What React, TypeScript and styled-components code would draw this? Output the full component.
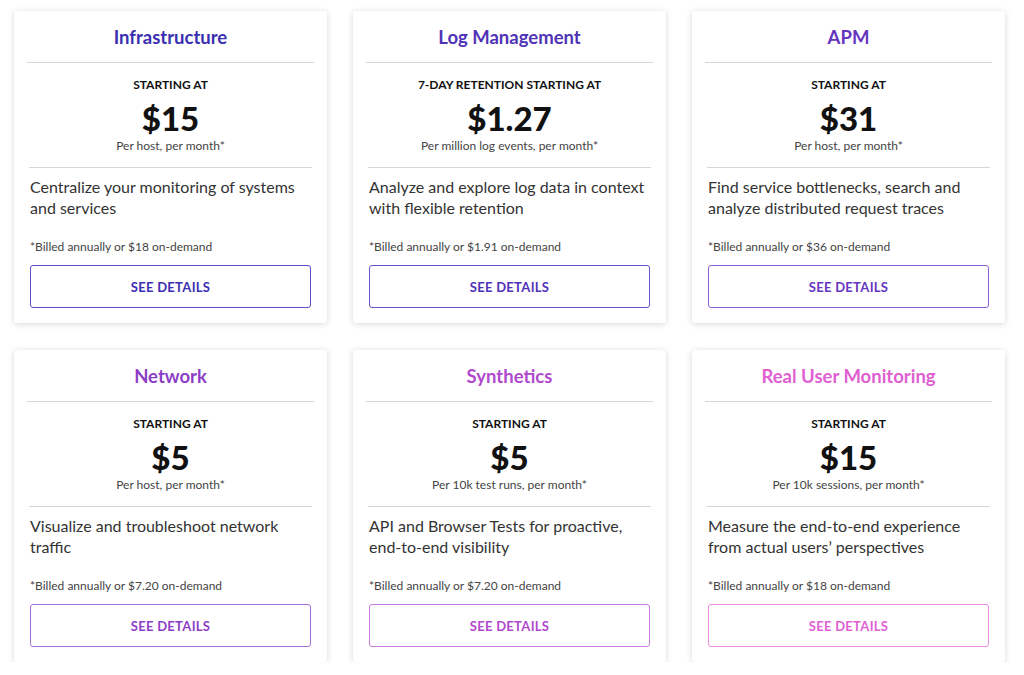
import React from "react";
import styled, { createGlobalStyle } from "styled-components";

const Global = createGlobalStyle`
  body { margin: 0; background: #fff; font-family: Lato, "Open Sans", sans-serif; }
`;

const Grid = styled.div`
  display: grid;
  grid-template-columns: repeat(3, 313px);
  column-gap: 26px;
  row-gap: 27px;
  padding: 11px 0 0 14px;
`;

const Card = styled.div`
  height: 312px;
  background: #fff;
  border-radius: 3px;
  box-shadow: 0 1px 6px rgba(0, 0, 0, 0.16);
  display: flex;
  flex-direction: column;
  padding: 0 13px;
  box-sizing: border-box;
`;

const Title = styled.div<{ $c: string }>`
  height: 51px;
  display: flex;
  align-items: center;
  justify-content: center;
  font-size: 18.5px;
  font-weight: 700;
  color: ${(p) => p.$c};
  border-bottom: 1px solid #d6d6d6;
`;

const PriceBlock = styled.div`
  height: 105px;
  border-bottom: 1px solid #d6d6d6;
  display: flex;
  flex-direction: column;
  align-items: center;
  padding-top: 14px;
  box-sizing: border-box;
  margin: 0 2px;
`;

const Label = styled.div`
  font-size: 12px;
  font-weight: 700;
  color: #111;
  line-height: 16px;
`;

const Price = styled.div`
  font-size: 33px;
  font-weight: 900;
  color: #111;
  line-height: 40px;
  margin-top: 5px;
`;

const Unit = styled.div`
  font-size: 12px;
  color: #444;
  line-height: 16px;
`;

const Desc = styled.div`
  font-size: 16px;
  line-height: 21px;
  color: #333;
  padding: 8px 3px 0;
  height: 51px;
`;

const Billed = styled.div`
  font-size: 12px;
  color: #444;
  padding: 12px 3px 0;
  line-height: 16px;
`;

const Button = styled.div<{ $c: string }>`
  margin: 10px 3px 0;
  height: 43px;
  border: 1px solid ${(p) => p.$c};
  border-radius: 3px;
  display: flex;
  align-items: center;
  justify-content: center;
  font-size: 13px;
  font-weight: 700;
  letter-spacing: 0.3px;
  box-sizing: border-box;
`;

const ButtonText = styled.span<{ $c: string }>`
  color: ${(p) => p.$c};
`;

const items = [
  { t: "Infrastructure", c: "#3a2fb0", b: "#5a4fc8", l: "STARTING AT", p: "$15", u: "Per host, per month*", d: "Centralize your monitoring of systems and services", f: "*Billed annually or $18 on-demand" },
  { t: "Log Management", c: "#4f33b6", b: "#6650c6", l: "7-DAY RETENTION STARTING AT", p: "$1.27", u: "Per million log events, per month*", d: "Analyze and explore log data in context with flexible retention", f: "*Billed annually or $1.91 on-demand" },
  { t: "APM", c: "#6636bf", b: "#8a5fd6", l: "STARTING AT", p: "$31", u: "Per host, per month*", d: "Find service bottlenecks, search and analyze distributed request traces", f: "*Billed annually or $36 on-demand" },
  { t: "Network", c: "#8c3ec7", b: "#a470d8", l: "STARTING AT", p: "$5", u: "Per host, per month*", d: "Visualize and troubleshoot network traffic", f: "*Billed annually or $7.20 on-demand" },
  { t: "Synthetics", c: "#b049cd", b: "#c77ddd", l: "STARTING AT", p: "$5", u: "Per 10k test runs, per month*", d: "API and Browser Tests for proactive, end-to-end visibility", f: "*Billed annually or $7.20 on-demand" },
  { t: "Real User Monitoring", c: "#e060d2", b: "#ea8de0", l: "STARTING AT", p: "$15", u: "Per 10k sessions, per month*", d: "Measure the end-to-end experience from actual users\u2019 perspectives", f: "*Billed annually or $18 on-demand" },
];

export default function App() {
  return (
    <>
      <Global />
      <Grid>
        {items.map((it) => (
          <Card key={it.t}>
            <Title $c={it.c}>{it.t}</Title>
            <PriceBlock>
              <Label>{it.l}</Label>
              <Price>{it.p}</Price>
              <Unit>{it.u}</Unit>
            </PriceBlock>
            <Desc>{it.d}</Desc>
            <Billed>{it.f}</Billed>
            <Button $c={it.b}>
              <ButtonText $c={it.c}>SEE DETAILS</ButtonText>
            </Button>
          </Card>
        ))}
      </Grid>
    </>
  );
}
